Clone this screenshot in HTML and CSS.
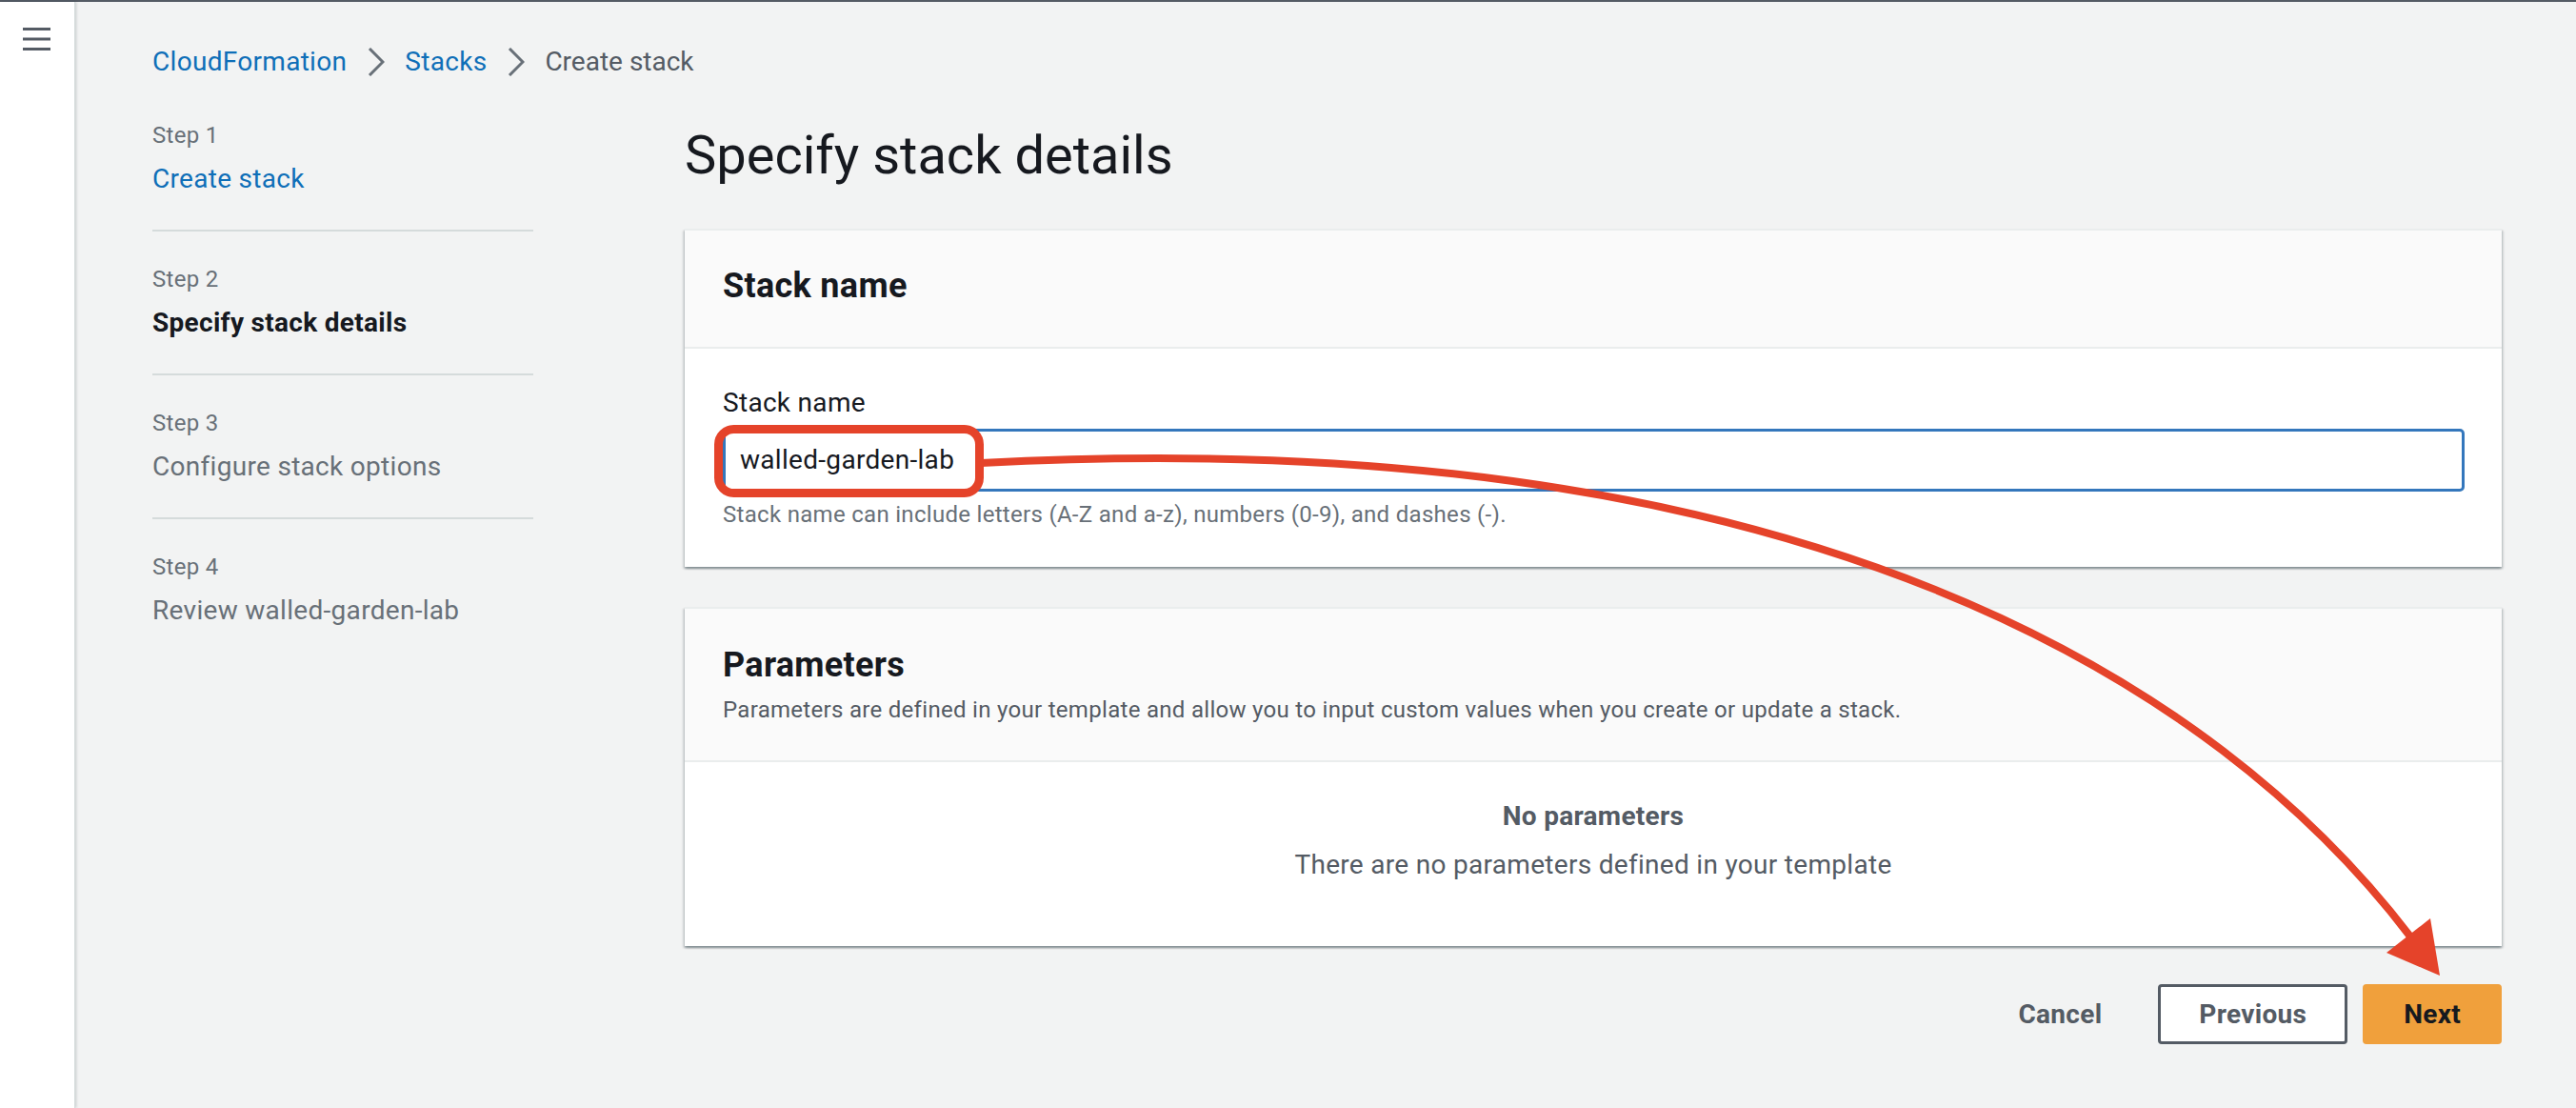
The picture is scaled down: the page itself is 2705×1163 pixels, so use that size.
FILE: index.html
```html
<!DOCTYPE html>
<html lang="en">
<head>
<meta charset="utf-8">
<title>Create stack - CloudFormation</title>
<link rel="stylesheet" href="styles.css">
</head>
<body>
<div class="app">
  <aside class="sidebar">
    <svg class="menu-icon" width="30" height="25" viewBox="0 0 30 25" aria-hidden="true">
      <rect x="0" y="0" width="29" height="3" fill="#545b64"/>
      <rect x="0" y="10.5" width="29" height="3" fill="#545b64"/>
      <rect x="0" y="21" width="29" height="3" fill="#545b64"/>
    </svg>
  </aside>
  <main class="main">
    <nav class="breadcrumbs">
      <a class="crumb-link" href="#">CloudFormation</a>
      <svg class="chev" width="18" height="30" viewBox="0 0 18 30" aria-hidden="true"><path d="M2 1 L16 15 L2 29" fill="none" stroke="#687078" stroke-width="3"/></svg>
      <a class="crumb-link" href="#">Stacks</a>
      <svg class="chev" width="18" height="30" viewBox="0 0 18 30" aria-hidden="true"><path d="M2 1 L16 15 L2 29" fill="none" stroke="#687078" stroke-width="3"/></svg>
      <span class="crumb-current">Create stack</span>
    </nav>
    <div class="wizard">
      <ol class="steps">
        <li class="step">
          <div class="step-num">Step 1</div>
          <a class="step-title step-link" href="#">Create stack</a>
        </li>
        <li class="step">
          <div class="step-num">Step 2</div>
          <div class="step-title step-active">Specify stack details</div>
        </li>
        <li class="step">
          <div class="step-num">Step 3</div>
          <div class="step-title">Configure stack options</div>
        </li>
        <li class="step">
          <div class="step-num">Step 4</div>
          <div class="step-title">Review walled-garden-lab</div>
        </li>
      </ol>
      <section class="content">
        <h1 class="page-title">Specify stack details</h1>
        <div class="card">
          <div class="card-header card-header-a">
            <h2 class="card-title">Stack name</h2>
          </div>
          <div class="card-body card-body-a">
            <label class="field-label" for="stackname">Stack name</label>
            <div class="input">walled-garden-lab</div>
            <div class="hint">Stack name can include letters (A-Z and a-z), numbers (0-9), and dashes (-).</div>
          </div>
        </div>
        <div class="card card-params">
          <div class="card-header card-header-b">
            <h2 class="card-title">Parameters</h2>
            <p class="card-desc">Parameters are defined in your template and allow you to input custom values when you create or update a stack.</p>
          </div>
          <div class="card-body card-body-b">
            <div class="empty-title">No parameters</div>
            <div class="empty-text">There are no parameters defined in your template</div>
          </div>
        </div>
        <div class="actions">
          <button class="btn btn-link">Cancel</button>
          <button class="btn btn-normal">Previous</button>
          <button class="btn btn-primary">Next</button>
        </div>
      </section>
    </div>
  </main>
</div>
<svg class="annotation" width="2705" height="1163" viewBox="0 0 2705 1163" aria-hidden="true">
  <rect x="754.5" y="450.5" width="274" height="67" rx="16" ry="16" fill="none" stroke="#e5432a" stroke-width="9"/>
  <path d="M1030 486 C 1900 440, 2330 720, 2531 983" fill="none" stroke="#e5432a" stroke-width="8"/>
  <polygon points="2552,964 2506,1000 2562,1024" fill="#e5432a"/>
</svg>
</body>
</html>
```
FILE: styles.css
```css
html, body {
  margin: 0;
  padding: 0;
}
body {
  position: relative;
  background: #f2f3f3;
  font-family: Roboto, "Liberation Sans", Arial, sans-serif;
  color: #16191f;
  letter-spacing: 0.3px;
  overflow: hidden;
}
.app {
  display: flex;
  min-height: 100vh;
  border-top: 2px solid #545b64;
  box-sizing: border-box;
}
.sidebar {
  flex: none;
  width: 78px;
  background: #ffffff;
  border-right: 1px solid #d5dbdb;
  box-shadow: 1px 0 3px rgba(0, 28, 36, 0.18);
  padding-top: 27px;
  box-sizing: content-box;
}
.menu-icon {
  display: block;
  margin-left: 24px;
}
.main {
  flex: 1;
  padding: 43px 78px 0 81px;
  min-width: 0;
}
.breadcrumbs {
  display: flex;
  align-items: center;
  height: 40px;
  font-size: 28px;
  line-height: 40px;
}
.crumb-link {
  color: #0f6fb8;
  text-decoration: none;
}
.chev {
  display: block;
  margin: 0 21px 0 22px;
}
.crumb-current {
  color: #545b64;
  letter-spacing: 0;
}
.wizard {
  display: grid;
  grid-template-columns: 400px 1fr;
  column-gap: 159px;
  margin-top: 41px;
}
.steps {
  list-style: none;
  margin: 0;
  padding: 0;
}
.step {
  padding-bottom: 33px;
}
.step + .step {
  border-top: 2px solid #d5dbdb;
  padding-top: 34px;
}
.step-num {
  font-size: 24px;
  line-height: 32px;
  color: #687078;
  margin-bottom: 10px;
}
.step-title {
  display: block;
  font-size: 28px;
  line-height: 40px;
  color: #687078;
}
.step-link {
  color: #0f6fb8;
  text-decoration: none;
}
.step-active {
  color: #16191f;
  font-weight: 700;
}
.content {
  padding-top: 5px;
}
.page-title {
  margin: 0 0 45px;
  font-size: 56px;
  line-height: 64px;
  font-weight: 400;
  letter-spacing: 0;
  color: #16191f;
}
.card {
  background: #ffffff;
  border-top: 2px solid #eaeded;
  box-shadow: 0 2px 2px rgba(0, 28, 36, 0.3), 2px 2px 2px rgba(0, 28, 36, 0.12), -2px 2px 2px rgba(0, 28, 36, 0.12);
}
.card-params {
  margin-top: 42px;
}
.card-header {
  background: #fafafa;
  border-bottom: 2px solid #eaeded;
  padding: 0 40px;
}
.card-header-a {
  padding-top: 36px;
  padding-bottom: 42px;
}
.card-header-b {
  padding-top: 37px;
  padding-bottom: 37px;
}
.card-title {
  margin: 0;
  font-size: 36px;
  line-height: 44px;
  font-weight: 700;
  color: #16191f;
}
.card-desc {
  margin: 9px 0 0;
  font-size: 24px;
  line-height: 32px;
  color: #545b64;
}
.card-body-a {
  padding: 37px 39px 39px 40px;
}
.field-label {
  display: block;
  font-size: 28px;
  line-height: 40px;
  color: #16191f;
  margin-bottom: 7px;
}
.input {
  box-sizing: border-box;
  height: 66px;
  border: 3px solid #3477bc;
  border-radius: 5px;
  padding: 0 15px;
  font-size: 28px;
  line-height: 60px;
  color: #16191f;
  background: #ffffff;
}
.hint {
  margin-top: 8px;
  font-size: 24px;
  line-height: 32px;
  color: #687078;
}
.card-body-b {
  padding: 37px 40px 65px;
  text-align: center;
  color: #545b64;
}
.empty-title {
  font-size: 28px;
  line-height: 40px;
  font-weight: 700;
  margin-bottom: 11px;
}
.empty-text {
  font-size: 28px;
  line-height: 40px;
}
.actions {
  display: flex;
  justify-content: flex-end;
  gap: 16px;
  margin-top: 40px;
}
.btn {
  box-sizing: border-box;
  height: 63px;
  padding: 0 40px;
  border: 3px solid transparent;
  border-radius: 4px;
  font-family: inherit;
  font-size: 28px;
  font-weight: 700;
  letter-spacing: 0.3px;
  line-height: 57px;
  cursor: pointer;
}
.btn-link {
  background: transparent;
  color: #545b64;
}
.btn-normal {
  background: #ffffff;
  border-color: #545b64;
  color: #545b64;
}
.btn-primary {
  background: #f0a03c;
  border-color: #f0a03c;
  color: #16191f;
}
.annotation {
  position: absolute;
  top: 0;
  left: 0;
  pointer-events: none;
}
```
